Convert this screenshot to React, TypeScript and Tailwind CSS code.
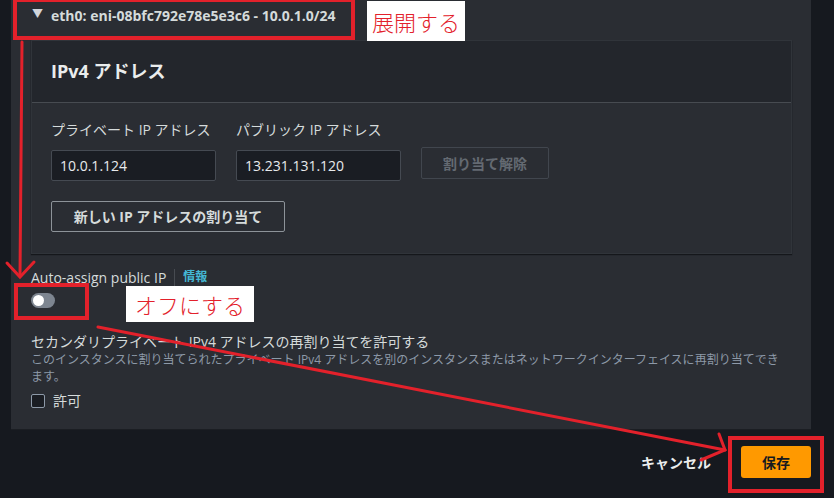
import React from "react";

const font = { fontFamily: '"Open Sans", "Noto Sans CJK JP", sans-serif' };
const redFont = { fontFamily: '"Noto Sans CJK JP", sans-serif' };

export default function App() {
  return (
    <div className="relative w-[834px] h-[498px] overflow-hidden bg-[#16191f] text-[#d1d5db]" style={font}>
      {/* main panel */}
      <div className="ml-[11px] w-[800px] h-[430px] bg-[#2a2d33] border-b border-[#1b1e23] flex flex-col">
        <div className="h-[40px] flex items-start pt-[5px] pl-[21px] gap-[8px]">
          <span className="text-[11px] text-[#d1d5db] mt-[1px]">▼</span>
          <span className="text-[14px] font-bold text-[#d5dbdb]">eth0: eni-08bfc792e78e5e3c6 - 10.0.1.0/24</span>
        </div>
        <div className="ml-[20px] w-[761px] border border-[#30343a] shadow-[0_1px_1px_#15171b]">
          <div className="h-[62px] bg-[#23262c] border-b border-[#474b51] flex items-center pl-[19px]">
            <span className="text-[18px] font-bold text-[#eaeded]">IPv4 アドレス</span>
          </div>
          <div className="h-[150px] bg-[#2a2d33] pl-[19px] pt-[17px]">
            <div className="flex gap-[20px] items-end">
              <div className="flex flex-col w-[165px]">
                <span className="text-[14px] leading-[20px] text-[#d5dbdb]">プライベート IP アドレス</span>
                <div className="mt-[10px] h-[31px] bg-[#1a1d23] border border-[#454a52] rounded-[2px] flex items-center pl-[8px] text-[14px] text-[#e8eaec]">10.0.1.124</div>
              </div>
              <div className="flex flex-col w-[165px]">
                <span className="text-[14px] leading-[20px] text-[#d5dbdb]">パブリック IP アドレス</span>
                <div className="mt-[10px] h-[31px] bg-[#1a1d23] border border-[#454a52] rounded-[2px] flex items-center pl-[8px] text-[14px] text-[#e8eaec]">13.231.131.120</div>
              </div>
              <div className="w-[128px] h-[32px] mb-[2px] border border-[#41464e] rounded-[2px] flex items-center justify-center text-[14px] font-bold text-[#646a72]">割り当て解除</div>
            </div>
            <div className="mt-[20px] w-[234px] h-[31px] border border-[#8d9399] rounded-[2px] flex items-center justify-center text-[14px] font-bold text-[#d5dbdb]">新しい IP アドレスの割り当て</div>
          </div>
        </div>
        <div className="pl-[20px] pt-[13px]">
          <div className="flex items-center h-[20px] text-[14px]">
            <span className="text-[#d5dbdb]">Auto-assign public IP</span>
            <span className="mx-[8px] w-px h-[17px] bg-[#474b51]"></span>
            <span className="font-bold text-[12px] text-[#44b9d6]">情報</span>
          </div>
          <div className="mt-[6px] w-[24px] h-[15px] rounded-full bg-[#7d8590] flex items-center pl-[2px]">
            <div className="w-[11px] h-[11px] rounded-full bg-white"></div>
          </div>
          <div className="mt-[24px] text-[14px] leading-[19px] text-[#d5dbdb]">セカンダリプライベート IPv4 アドレスの再割り当てを許可する</div>
          <div className="text-[12px] leading-[17px] text-[#8d99a8] w-[760px]">このインスタンスに割り当てられたプライベート IPv4 アドレスを別のインスタンスまたはネットワークインターフェイスに再割り当てでき ます。</div>
          <div className="mt-[5px] flex items-center gap-[8px]">
            <div className="w-[14px] h-[14px] border border-[#8d99a8] rounded-[2px] bg-[#1a1d23]"></div>
            <span className="text-[14px] text-[#d5dbdb]">許可</span>
          </div>
        </div>
      </div>
      {/* footer */}
      <div className="w-[811px] h-[68px] flex items-center justify-end gap-[30px] pb-[4px]">
        <span className="text-[14px] font-bold text-[#eaeded]">キャンセル</span>
        <div className="w-[70px] h-[32px] bg-[#ff9900] rounded-[3px] flex items-center justify-center text-[14px] font-bold text-[#16191f]">保存</div>
      </div>

      {/* annotations */}
      <div className="absolute left-[13px] top-[-2px] w-[342px] h-[42px] border-[4px] border-[#e3212b]"></div>
      <div className="absolute left-[367px] top-[1px] w-[98px] h-[40px] bg-white flex items-center justify-center text-[22px] font-light text-[#e3212b]" style={redFont}>展開する</div>
      <div className="absolute left-[14px] top-[283px] w-[75px] h-[37px] border-[4px] border-[#e3212b]"></div>
      <div className="absolute left-[126px] top-[286px] w-[128px] h-[36px] bg-white flex items-center justify-center text-[22px] font-light text-[#e3212b]" style={redFont}>オフにする</div>
      <div className="absolute left-[728px] top-[436px] w-[96px] h-[57px] border-[4px] border-[#e3212b]"></div>
      <svg className="absolute left-0 top-0" width="834" height="498" viewBox="0 0 834 498">
        <g stroke="#e3212b" strokeWidth="3" fill="none" strokeLinecap="round">
          <path d="M22 42 L20 276" />
          <path d="M7 263 L20 277 L34 262" />
          <path d="M98 327 L725 450" />
          <path d="M719 434 L725 450 L701 460" />
        </g>
      </svg>
    </div>
  );
}
